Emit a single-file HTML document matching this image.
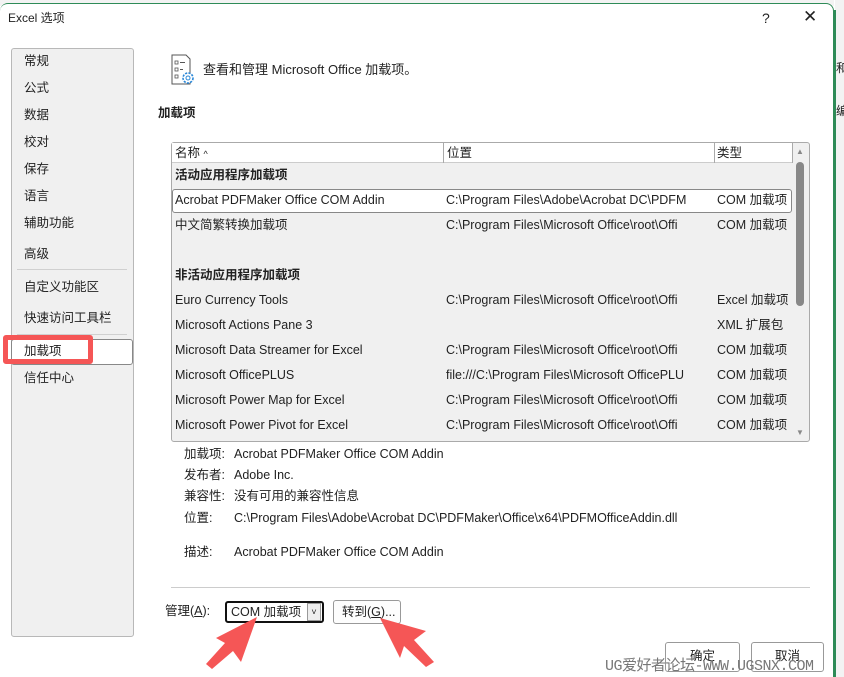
<!DOCTYPE html>
<html><head><meta charset="utf-8"><style>
*{margin:0;padding:0;box-sizing:border-box}
body{width:844px;height:677px;overflow:hidden;background:#fff;font-family:"Liberation Sans","Noto Sans CJK SC",sans-serif;font-size:12.5px;color:#222;position:relative}
.a{position:absolute;white-space:nowrap}
.t{line-height:16px}
</style></head><body>
<div class="a" style="left:835px;top:0;width:9px;height:677px;background:#f3f3f3"></div>
<div class="a" style="left:834px;top:10px;width:2px;height:667px;background:#2e8b57"></div>
<div class="a t" style="left:836px;top:60px;font-size:12px">和</div>
<div class="a t" style="left:836px;top:103px;font-size:12px">编</div>
<div class="a" style="left:0;top:0;width:834px;height:6px;background:#f3f3f3"></div>
<div class="a" style="left:0;top:3px;width:834px;height:674px;background:#fff;border-radius:8px 8px 0 0;border:1px solid #2e8b57;border-bottom:none;border-left:none"></div>

<div class="a t" style="left:8px;top:10px;font-size:12px">Excel 选项</div>
<div class="a t" style="left:762px;top:10px;font-size:14px">?</div>
<div class="a t" style="left:803px;top:9px;font-size:17px;font-weight:300">✕</div>

<div class="a" style="left:11px;top:48px;width:123px;height:589px;background:#f0f0f0;border:1px solid #b8b8b8;border-radius:3px"></div>
<div class="a" style="left:17px;top:269px;width:110px;height:1px;background:#d0d0d0"></div>
<div class="a" style="left:17px;top:334px;width:110px;height:1px;background:#d0d0d0"></div>
<div class="a" style="left:11px;top:339px;width:122px;height:26px;background:#fff;border:1px solid #888;border-radius:3px"></div>
<div class="a" style="left:3px;top:335px;width:90px;height:29px;border:5px solid #f55656;border-radius:3px"></div>
<div class="a t" style="left:24px;top:53px">常规</div>
<div class="a t" style="left:24px;top:80px">公式</div>
<div class="a t" style="left:24px;top:107px">数据</div>
<div class="a t" style="left:24px;top:134px">校对</div>
<div class="a t" style="left:24px;top:161px">保存</div>
<div class="a t" style="left:24px;top:188px">语言</div>
<div class="a t" style="left:24px;top:215px">辅助功能</div>
<div class="a t" style="left:24px;top:246px">高级</div>
<div class="a t" style="left:24px;top:279px">自定义功能区</div>
<div class="a t" style="left:24px;top:310px">快速访问工具栏</div>
<div class="a t" style="left:24px;top:343px">加载项</div>
<div class="a t" style="left:24px;top:370px">信任中心</div>

<svg class="a" style="left:171px;top:54px" width="26" height="32" viewBox="0 0 26 32">
<path d="M1 1h14l4 4v25H1z" fill="#fff" stroke="#555"/>
<rect x="4" y="7" width="3" height="3" fill="none" stroke="#555" stroke-width=".8"/><path d="M9 8.5h5" stroke="#555"/>
<rect x="4" y="14" width="3" height="3" fill="none" stroke="#555" stroke-width=".8"/><path d="M9 15.5h3" stroke="#555"/>
<rect x="4" y="21" width="3" height="3" fill="none" stroke="#555" stroke-width=".8"/>
<circle cx="17" cy="24" r="5" fill="#fff" stroke="#2b88d8" stroke-width="1.6" stroke-dasharray="2.2 1.2"/><circle cx="17" cy="24" r="2" fill="none" stroke="#2b88d8"/>
</svg>
<div class="a t" style="left:203px;top:62px;font-size:13px">查看和管理 Microsoft Office 加载项。</div>
<div class="a t" style="left:158px;top:105px;font-weight:bold">加载项</div>

<div class="a" style="left:171px;top:142px;width:639px;height:300px;background:#f0f0f0;border:1px solid #aaa;border-radius:3px"></div>
<div class="a" style="left:172px;top:143px;width:620px;height:20px;background:#fff;border-bottom:1px solid #ccc"></div>
<div class="a" style="left:443px;top:143px;width:1px;height:20px;background:#aaa"></div>
<div class="a" style="left:714px;top:143px;width:1px;height:20px;background:#aaa"></div>
<div class="a" style="left:792px;top:143px;width:1px;height:20px;background:#aaa"></div>
<div class="a t" style="left:175px;top:145px">名称 <span style="font-size:9px">^</span></div>
<div class="a t" style="left:447px;top:145px">位置</div>
<div class="a t" style="left:717px;top:145px">类型</div>
<div class="a" style="left:796px;top:162px;width:8px;height:144px;background:#888;border-radius:4px"></div>
<div class="a" style="left:796px;top:147px;font-size:8px;color:#888">▲</div>
<div class="a" style="left:796px;top:428px;font-size:8px;color:#888">▼</div>
<div class="a" style="left:172px;top:189px;width:620px;height:24px;background:#fff;border:1px solid #888;border-radius:3px"></div>
<div class="a t" style="left:175px;top:167px;font-weight:bold">活动应用程序加载项</div>
<div class="a t" style="left:175px;top:267px;font-weight:bold">非活动应用程序加载项</div>
<div class="a t" style="left:175px;top:192px">Acrobat PDFMaker Office COM Addin</div><div class="a t" style="left:446px;top:192px">C:\Program Files\Adobe\Acrobat DC\PDFM</div><div class="a t" style="left:717px;top:192px">COM 加载项</div>
<div class="a t" style="left:175px;top:217px">中文简繁转换加载项</div><div class="a t" style="left:446px;top:217px">C:\Program Files\Microsoft Office\root\Offi</div><div class="a t" style="left:717px;top:217px">COM 加载项</div>
<div class="a t" style="left:175px;top:292px">Euro Currency Tools</div><div class="a t" style="left:446px;top:292px">C:\Program Files\Microsoft Office\root\Offi</div><div class="a t" style="left:717px;top:292px">Excel 加载项</div>
<div class="a t" style="left:175px;top:317px">Microsoft Actions Pane 3</div><div class="a t" style="left:717px;top:317px">XML 扩展包</div>
<div class="a t" style="left:175px;top:342px">Microsoft Data Streamer for Excel</div><div class="a t" style="left:446px;top:342px">C:\Program Files\Microsoft Office\root\Offi</div><div class="a t" style="left:717px;top:342px">COM 加载项</div>
<div class="a t" style="left:175px;top:367px">Microsoft OfficePLUS</div><div class="a t" style="left:446px;top:367px">file:///C:\Program Files\Microsoft OfficePLU</div><div class="a t" style="left:717px;top:367px">COM 加载项</div>
<div class="a t" style="left:175px;top:392px">Microsoft Power Map for Excel</div><div class="a t" style="left:446px;top:392px">C:\Program Files\Microsoft Office\root\Offi</div><div class="a t" style="left:717px;top:392px">COM 加载项</div>
<div class="a t" style="left:175px;top:417px">Microsoft Power Pivot for Excel</div><div class="a t" style="left:446px;top:417px">C:\Program Files\Microsoft Office\root\Offi</div><div class="a t" style="left:717px;top:417px">COM 加载项</div>

<div class="a t" style="left:184px;top:446px">加载项:</div><div class="a t" style="left:234px;top:446px">Acrobat PDFMaker Office COM Addin</div>
<div class="a t" style="left:184px;top:467px">发布者:</div><div class="a t" style="left:234px;top:467px">Adobe Inc.</div>
<div class="a t" style="left:184px;top:488px">兼容性:</div><div class="a t" style="left:234px;top:488px">没有可用的兼容性信息</div>
<div class="a t" style="left:184px;top:510px">位置:</div><div class="a t" style="left:234px;top:510px">C:\Program Files\Adobe\Acrobat DC\PDFMaker\Office\x64\PDFMOfficeAddin.dll</div>
<div class="a t" style="left:184px;top:544px">描述:</div><div class="a t" style="left:234px;top:544px">Acrobat PDFMaker Office COM Addin</div>

<div class="a" style="left:171px;top:587px;width:639px;height:1px;background:#ccc"></div>
<div class="a t" style="left:165px;top:603px">管理(<u>A</u>):</div>
<div class="a" style="left:225px;top:601px;width:99px;height:22px;border:2px solid #111;border-radius:3px;background:#fff"></div>
<div class="a t" style="left:231px;top:604px">COM 加载项</div>
<div class="a" style="left:307px;top:603px;width:14px;height:18px;background:#eee;border:1px solid #999;font-size:9px;text-align:center;line-height:16px">˅</div>
<div class="a" style="left:333px;top:600px;width:68px;height:24px;border:1px solid #999;border-radius:3px;background:#fdfdfd"></div>
<div class="a t" style="left:342px;top:604px">转到(<u>G</u>)...</div>
<div class="a" style="left:665px;top:642px;width:75px;height:30px;border:1px solid #999;border-radius:3px"></div>
<div class="a t" style="left:690px;top:648px">确定</div>
<div class="a" style="left:751px;top:642px;width:73px;height:30px;border:1px solid #999;border-radius:3px"></div>
<div class="a t" style="left:775px;top:648px">取消</div>
<div class="a" style="left:605px;top:654px;font-family:'Liberation Mono','Noto Sans CJK SC',monospace;font-size:15px;color:#777;letter-spacing:-0.5px">UG爱好者论坛-WWW.UGSNX.COM</div>

<svg class="a" style="left:0;top:0" width="844" height="677" viewBox="0 0 844 677">
<path d="M257 617L241 662L233 651L212 669L206 664L225 643L216 638Z" fill="#f55656"/>
<path d="M380 618L426 631L414 640L434 662L426 667L404 646L400 658Z" fill="#f55656"/>
</svg>
</body></html>
